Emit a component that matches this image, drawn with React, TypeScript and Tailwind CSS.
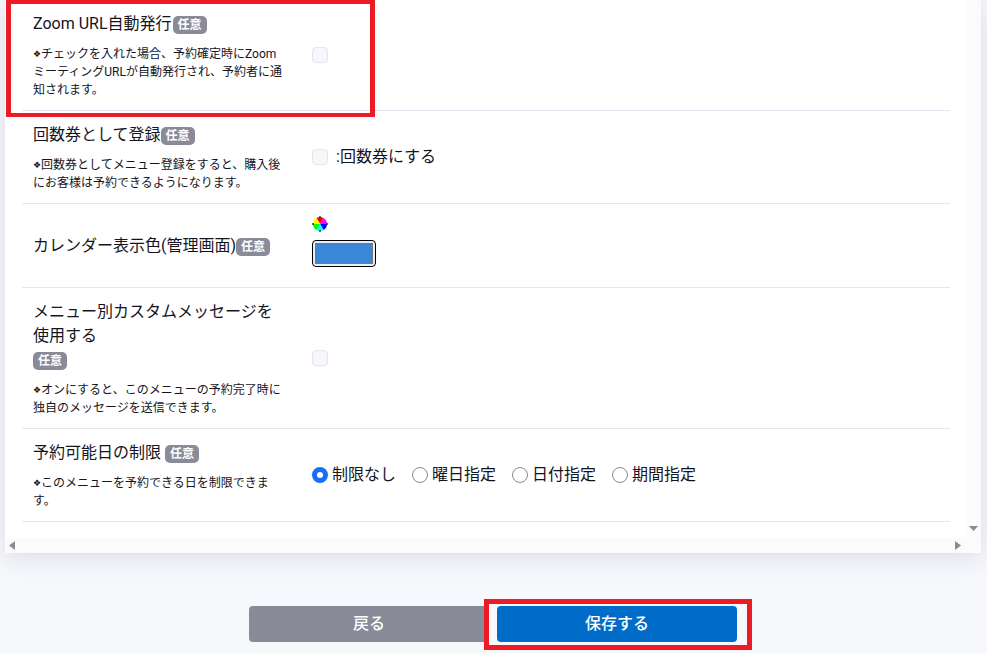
import type { ReactNode } from "react";

const fontStack = "font-['Roboto','Noto_Sans_CJK_JP',sans-serif]";

function Badge({ className = "" }: { className?: string }) {
  return (
    <span className={`mt-1 inline-block h-[18px] w-[34px] rounded-[5px] bg-[#8a8b99] text-center align-top text-[12px] leading-[18px] font-bold text-white ${className}`}>
      任意
    </span>
  );
}

function Note({ children }: { children: ReactNode }) {
  return (
    <p className="mt-[9px] -mb-px w-[253px] text-[12px] leading-[18px] text-[#14141e]">
      <span className="inline-block h-[18px] w-[8px] align-top font-['DejaVu_Sans',sans-serif] text-[9px]">❖</span>
      {children}
    </p>
  );
}

function Check() {
  return <span className="block h-4 w-4 shrink-0 rounded-[4px] border border-[#e3e5f0] bg-[#f7f8fc]" />;
}

function Row({ label, children, className = "" }: { label: ReactNode; children: ReactNode; className?: string }) {
  return (
    <div className={`flex items-center border-b border-[#e3e5f0] pl-[11px] ${className}`}>
      <div className="w-[279px] shrink-0 py-3">{label}</div>
      {children}
    </div>
  );
}

function Title({ children }: { children: ReactNode }) {
  return <div className="w-[253px] text-[16px] leading-6 text-[#14141e]">{children}</div>;
}

function Radio({ label, checked = false }: { label: string; checked?: boolean }) {
  return (
    <label className="flex w-[100px] items-center gap-1 text-[16px] leading-6 text-[#14141e]">
      {checked ? (
        <span className="block h-4 w-4 rounded-full border-[5px] border-[#1a6ef5] bg-white" />
      ) : (
        <span className="block h-4 w-4 rounded-full border border-[#8a8b99] bg-white" />
      )}
      {label}
    </label>
  );
}

function ColorWheel() {
  const colors = ["#ff0000", "#ff00ff", "#0000ff", "#00ffff", "#00ff00", "#ffff00"];
  return (
    <svg width="16" height="16" viewBox="-8 -8 16 16" className="block">
      {colors.map((c, i) => {
        const a0 = ((i * 60 - 120) * Math.PI) / 180;
        const a1 = (((i + 1) * 60 - 120) * Math.PI) / 180;
        return (
          <path
            key={c}
            d={`M0 0L${7 * Math.cos(a0)} ${7 * Math.sin(a0)}A7 7 0 0 1 ${7 * Math.cos(a1)} ${7 * Math.sin(a1)}Z`}
            fill={c}
          />
        );
      })}
      <path d="M0-8V-6M0 6V8M-8 0H-6M6 0H8" stroke="#333" strokeWidth="1.4" />
    </svg>
  );
}

export default function App() {
  return (
    <div className={`relative h-[653px] overflow-hidden bg-[#f7f8fc] ${fontStack}`}>
      {/* Form card */}
      <div className="ml-[5px] flex h-[553px] w-[976px] flex-col bg-white shadow-[0_4px_24px_rgba(60,60,90,0.14)]">
        <div className="flex min-h-0 flex-1">
          <div className="min-w-0 flex-1 overflow-hidden">
            <div className="ml-[17px] w-[928px]">
              <Row
                label={
                  <>
                    <Title>
                      Zoom URL自動発行
                      <Badge className="ml-px" />
                    </Title>
                    <Note>チェックを入れた場合、予約確定時にZoomミーティングURLが自動発行され、予約者に通知されます。</Note>
                  </>
                }
              >
                <Check />
              </Row>

              <Row
                label={
                  <>
                    <Title>
                      回数券として登録
                      <Badge />
                    </Title>
                    <Note>回数券としてメニュー登録をすると、購入後にお客様は予約できるようになります。</Note>
                  </>
                }
              >
                <Check />
                <span className="ml-2 text-[16px] leading-6 text-[#14141e]">:回数券にする</span>
              </Row>

              <Row
                className="h-[84px]"
                label={
                  <Title>
                    カレンダー表示色(管理画面)
                    <Badge />
                  </Title>
                }
              >
                <div className="flex flex-col gap-2 self-start pt-3">
                  <ColorWheel />
                  <div className="h-[27px] w-16 rounded-[4px] border border-black bg-[#efefef] p-[2px]">
                    <div className="h-full w-full border border-[#777777] bg-[#3a87d8]" />
                  </div>
                </div>
              </Row>

              <Row
                label={
                  <>
                    <Title>
                      メニュー別カスタムメッセージを使用する
                      <div className="h-6">
                        <Badge />
                      </div>
                    </Title>
                    <Note>オンにすると、このメニューの予約完了時に独自のメッセージを送信できます。</Note>
                  </>
                }
              >
                <Check />
              </Row>

              <Row
                label={
                  <>
                    <Title>
                      予約可能日の制限
                      <Badge className="ml-1" />
                    </Title>
                    <Note>このメニューを予約できる日を制限できます。</Note>
                  </>
                }
              >
                <div className="flex">
                  <Radio label="制限なし" checked />
                  <Radio label="曜日指定" />
                  <Radio label="日付指定" />
                  <Radio label="期間指定" />
                </div>
              </Row>
            </div>
          </div>
          {/* Vertical scrollbar */}
          <div className="flex w-[15px] shrink-0 flex-col items-center justify-end bg-[#fbfbfb] pb-[7px]">
            <svg width="9" height="5" viewBox="0 0 9 5" className="block">
              <path d="M0 0H9L4.500 5Z" fill="#8c8c8c" />
            </svg>
          </div>
        </div>
        {/* Horizontal scrollbar */}
        <div className="flex h-[15px] shrink-0 items-center justify-between bg-[#fbfbfb] pr-[20px] pl-1">
          <svg width="6" height="9" viewBox="0 0 6 9" className="block">
            <path d="M6 0V9L0 4.500Z" fill="#8c8c8c" />
          </svg>
          <svg width="6" height="9" viewBox="0 0 6 9" className="block">
            <path d="M0 0V9L6 4.500Z" fill="#8c8c8c" />
          </svg>
        </div>
      </div>

      {/* Actions */}
      <div className="mt-[53px] flex justify-center gap-2 pr-px">
        <button className="h-9 w-60 rounded-[4px] bg-[#8a8b99] text-[16px] font-medium text-white">戻る</button>
        <button className="h-9 w-60 rounded-[4px] bg-[#006cc8] text-[16px] font-medium text-white">保存する</button>
      </div>

      {/* Red annotation boxes */}
      <div className="absolute top-0 left-[6px] h-[117px] w-[369px] border-x-[5px] border-y-4 border-[#ed1c24]" />
      <div className="absolute top-[599px] left-[484px] h-[51px] w-[268px] border-[5px] border-[#ed1c24]" />
    </div>
  );
}
